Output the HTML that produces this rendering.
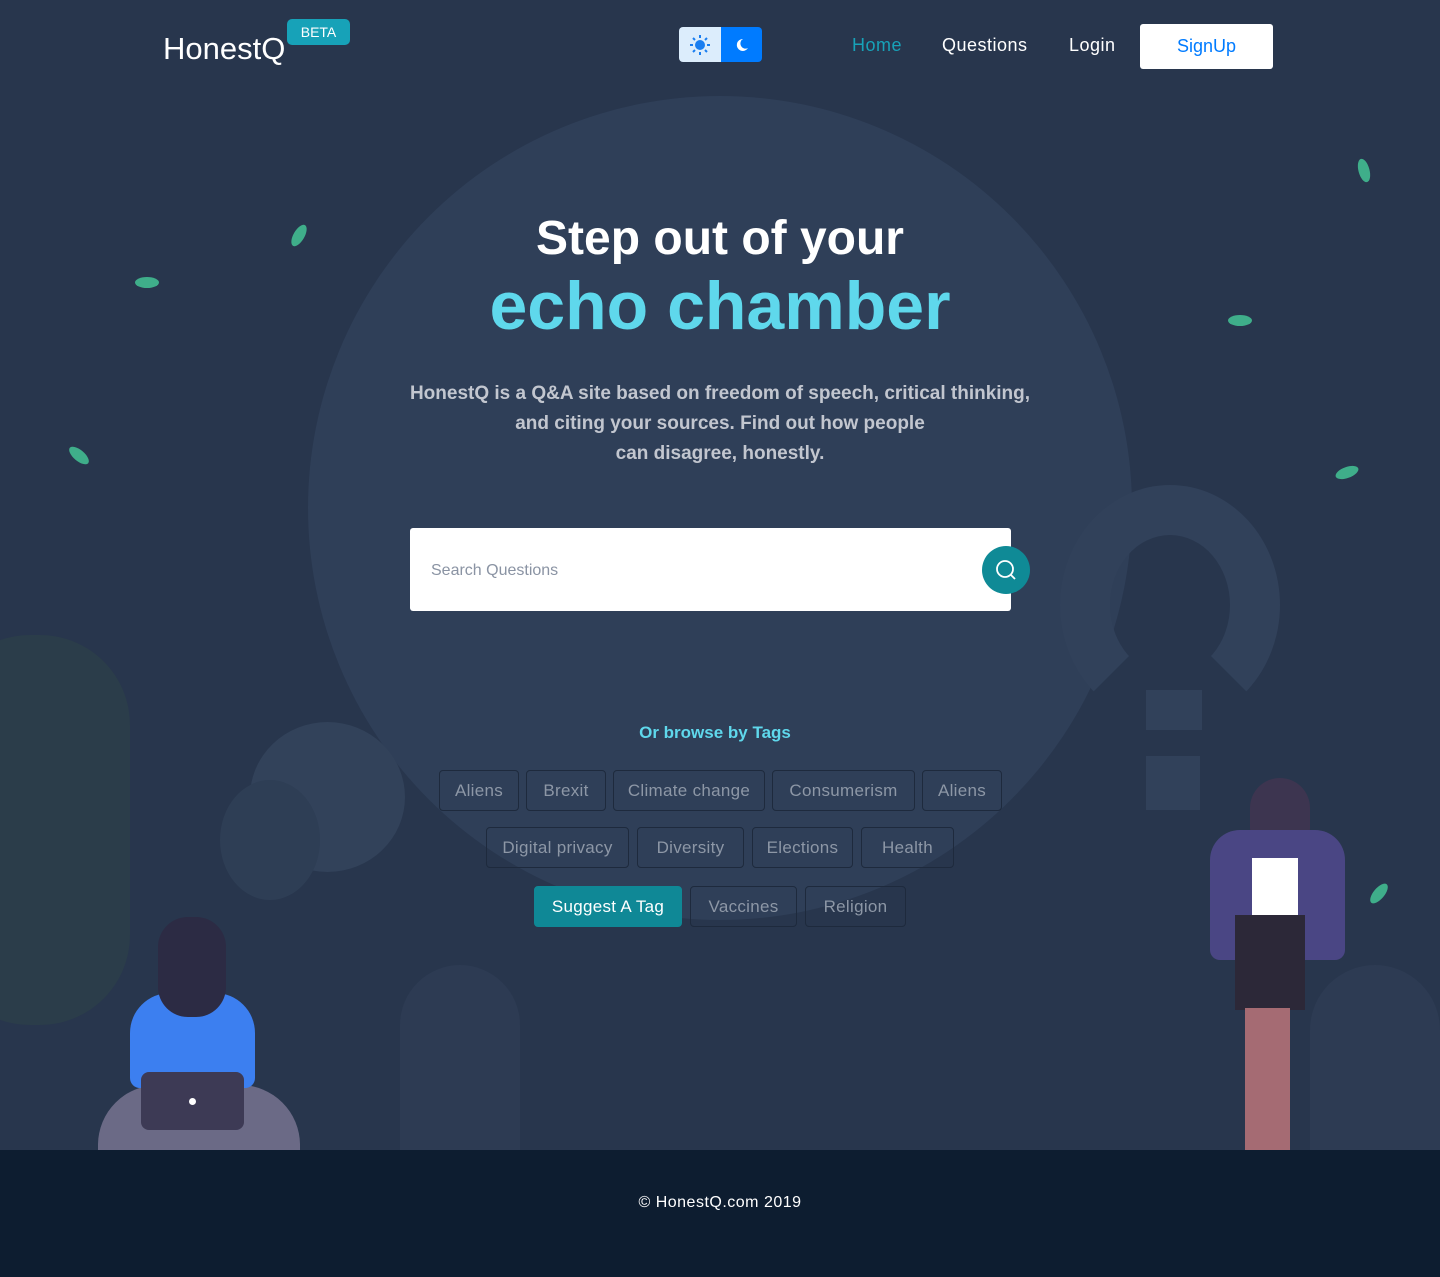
<!DOCTYPE html>
<html><head><meta charset="utf-8"><style>
*{margin:0;padding:0;box-sizing:border-box}
body{width:1440px;height:1277px;background:#28364d;font-family:"Liberation Sans",sans-serif;position:relative;overflow:hidden}
.a{position:absolute}
.circle{left:308px;top:96px;width:824px;height:824px;border-radius:50%;background:#2f3f58}
.tag{position:absolute;height:41px;border:1px solid #1e2a3d;border-radius:4px;color:#8d97a6;font-size:17px;display:flex;align-items:center;justify-content:center;letter-spacing:.3px}
.leaf{position:absolute;width:24px;height:11px;border-radius:50%;background:#3fae8a}
</style></head><body>
<div class="a circle"></div>
<div class="a" style="left:-60px;top:635px;width:190px;height:390px;border-radius:90px;background:#2b3d4a"></div>
<div class="a" style="left:250px;top:722px;width:155px;height:150px;border-radius:50%;background:#32425a"></div>
<div class="a" style="left:220px;top:780px;width:100px;height:120px;border-radius:50%;background:#2e3e55"></div>
<div class="a" style="left:1060px;top:485px;width:220px;height:240px;border-radius:50%;border:50px solid #31415a;border-bottom-color:transparent"></div>
<div class="a" style="left:1146px;top:690px;width:56px;height:40px;background:#31415a"></div>
<div class="a" style="left:1146px;top:756px;width:54px;height:54px;background:#31415a"></div>
<div class="a" style="left:400px;top:965px;width:120px;height:185px;border-radius:60px 60px 0 0;background:#2d3b53"></div>
<div class="a" style="left:1310px;top:965px;width:130px;height:185px;border-radius:70px 70px 0 0;background:#2d3b53"></div>
<div class="leaf" style="left:287px;top:230px;transform:rotate(-60deg)"></div>
<div class="leaf" style="left:135px;top:277px;"></div>
<div class="leaf" style="left:67px;top:450px;transform:rotate(40deg)"></div>
<div class="leaf" style="left:1352px;top:165px;transform:rotate(75deg)"></div>
<div class="leaf" style="left:1228px;top:315px"></div>
<div class="leaf" style="left:1335px;top:467px;transform:rotate(-20deg)"></div>
<div class="leaf" style="left:1367px;top:888px;transform:rotate(-50deg)"></div>
<div class="a" style="left:98px;top:1085px;width:202px;height:65px;border-radius:60px 60px 0 0;background:#6b6a86"></div>
<div class="a" style="left:130px;top:993px;width:125px;height:95px;border-radius:40px 40px 10px 10px;background:#3c7ff0"></div>
<div class="a" style="left:158px;top:917px;width:68px;height:100px;border-radius:30px;background:#2c2b44"></div>
<div class="a" style="left:141px;top:1072px;width:103px;height:58px;border-radius:8px;background:#3d3a55"></div>
<div class="a" style="left:189px;top:1098px;width:7px;height:7px;border-radius:50%;background:#fff"></div>
<div class="a" style="left:1250px;top:778px;width:60px;height:80px;border-radius:30px;background:#3d3550"></div>
<div class="a" style="left:1210px;top:830px;width:135px;height:130px;border-radius:30px 30px 10px 10px;background:#4a4684"></div>
<div class="a" style="left:1252px;top:858px;width:46px;height:58px;background:#fff"></div>
<div class="a" style="left:1235px;top:915px;width:70px;height:95px;background:#2c2838"></div>
<div class="a" style="left:1245px;top:1008px;width:45px;height:142px;background:#a56b73"></div>
<div class="a" style="left:163px;top:31px;font-size:31px;color:#fff">HonestQ</div>
<div class="a" style="left:287px;top:19px;width:63px;height:26px;border-radius:5px;background:#17a2b8;color:#fff;font-size:14px;display:flex;align-items:center;justify-content:center">BETA</div>
<div class="a" style="left:679px;top:27px;width:42px;height:35px;background:#dcedfc;border-radius:4px 0 0 4px;display:flex;align-items:center;justify-content:center">
<svg width="22" height="22" viewBox="0 0 22 22"><circle cx="11" cy="11" r="5" fill="#1a7ef0"/><g stroke="#1a7ef0" stroke-width="2"><path d="M11 1v3M11 18v3M1 11h3M18 11h3M4 4l2 2M16 16l2 2M4 18l2-2M16 6l2-2"/></g></svg></div>
<div class="a" style="left:721px;top:27px;width:41px;height:35px;background:#007bff;border-radius:0 4px 4px 0;display:flex;align-items:center;justify-content:center">
<svg width="16" height="16" viewBox="0 0 16 16"><path d="M9 2a6 6 0 1 0 5 9a5 5 0 0 1-5-9z" fill="#fff"/></svg></div>
<div class="a" style="left:852px;top:35px;font-size:18px;color:#17a2b8;letter-spacing:.5px">Home</div>
<div class="a" style="left:942px;top:35px;font-size:18px;color:#fff;letter-spacing:.5px">Questions</div>
<div class="a" style="left:1069px;top:35px;font-size:18px;color:#fff;letter-spacing:.5px">Login</div>
<div class="a" style="left:1140px;top:24px;width:133px;height:45px;background:#fff;border-radius:3px;color:#007bff;font-size:18px;display:flex;align-items:center;justify-content:center">SignUp</div>
<div class="a" style="left:0;width:1440px;top:211px;text-align:center;color:#fff;font-size:48px;font-weight:bold">Step out of your</div>
<div class="a" style="left:0;width:1440px;top:267px;text-align:center;color:#5fd8ec;font-size:68px;font-weight:bold">echo chamber</div>
<div class="a" style="left:0;width:1440px;top:379px;text-align:center;color:#c2c6cf;font-size:19px;font-weight:bold;line-height:30px">HonestQ is a Q&amp;A site based on freedom of speech, critical thinking,<br>and citing your sources. Find out how people<br>can disagree, honestly.</div>
<div class="a" style="left:410px;top:528px;width:601px;height:83px;background:#fff;border-radius:3px"></div>
<div class="a" style="left:431px;top:562px;font-size:16px;color:#8a93a3">Search Questions</div>
<div class="a" style="left:982px;top:546px;width:48px;height:48px;border-radius:50%;background:#0f8a96;display:flex;align-items:center;justify-content:center">
<svg width="24" height="24" viewBox="0 0 24 24" fill="none" stroke="#fff" stroke-width="1.8"><circle cx="11" cy="11" r="8"/><path d="M17 17l4 4"/></svg></div>
<div class="a" style="left:0;width:1430px;top:723px;text-align:center;color:#5fd8ec;font-size:17px;font-weight:bold">Or browse by Tags</div>
<div class="tag" style="left:439px;top:770px;width:80px">Aliens</div>
<div class="tag" style="left:526px;top:770px;width:80px">Brexit</div>
<div class="tag" style="left:613px;top:770px;width:152px">Climate change</div>
<div class="tag" style="left:772px;top:770px;width:143px">Consumerism</div>
<div class="tag" style="left:922px;top:770px;width:80px">Aliens</div>
<div class="tag" style="left:486px;top:827px;width:143px">Digital privacy</div>
<div class="tag" style="left:637px;top:827px;width:107px">Diversity</div>
<div class="tag" style="left:752px;top:827px;width:101px">Elections</div>
<div class="tag" style="left:861px;top:827px;width:93px">Health</div>
<div class="tag" style="left:534px;top:886px;width:148px;background:#0f8896;border-color:#0f8896;color:#fff">Suggest A Tag</div>
<div class="tag" style="left:690px;top:886px;width:107px">Vaccines</div>
<div class="tag" style="left:805px;top:886px;width:101px">Religion</div>
<div class="a" style="left:0;top:1150px;width:1440px;height:127px;background:#0d1d30"></div>
<div class="a" style="left:0;width:1440px;top:1194px;text-align:center;color:#fff;font-size:16px;letter-spacing:.5px">© HonestQ.com 2019</div>
</body></html>
